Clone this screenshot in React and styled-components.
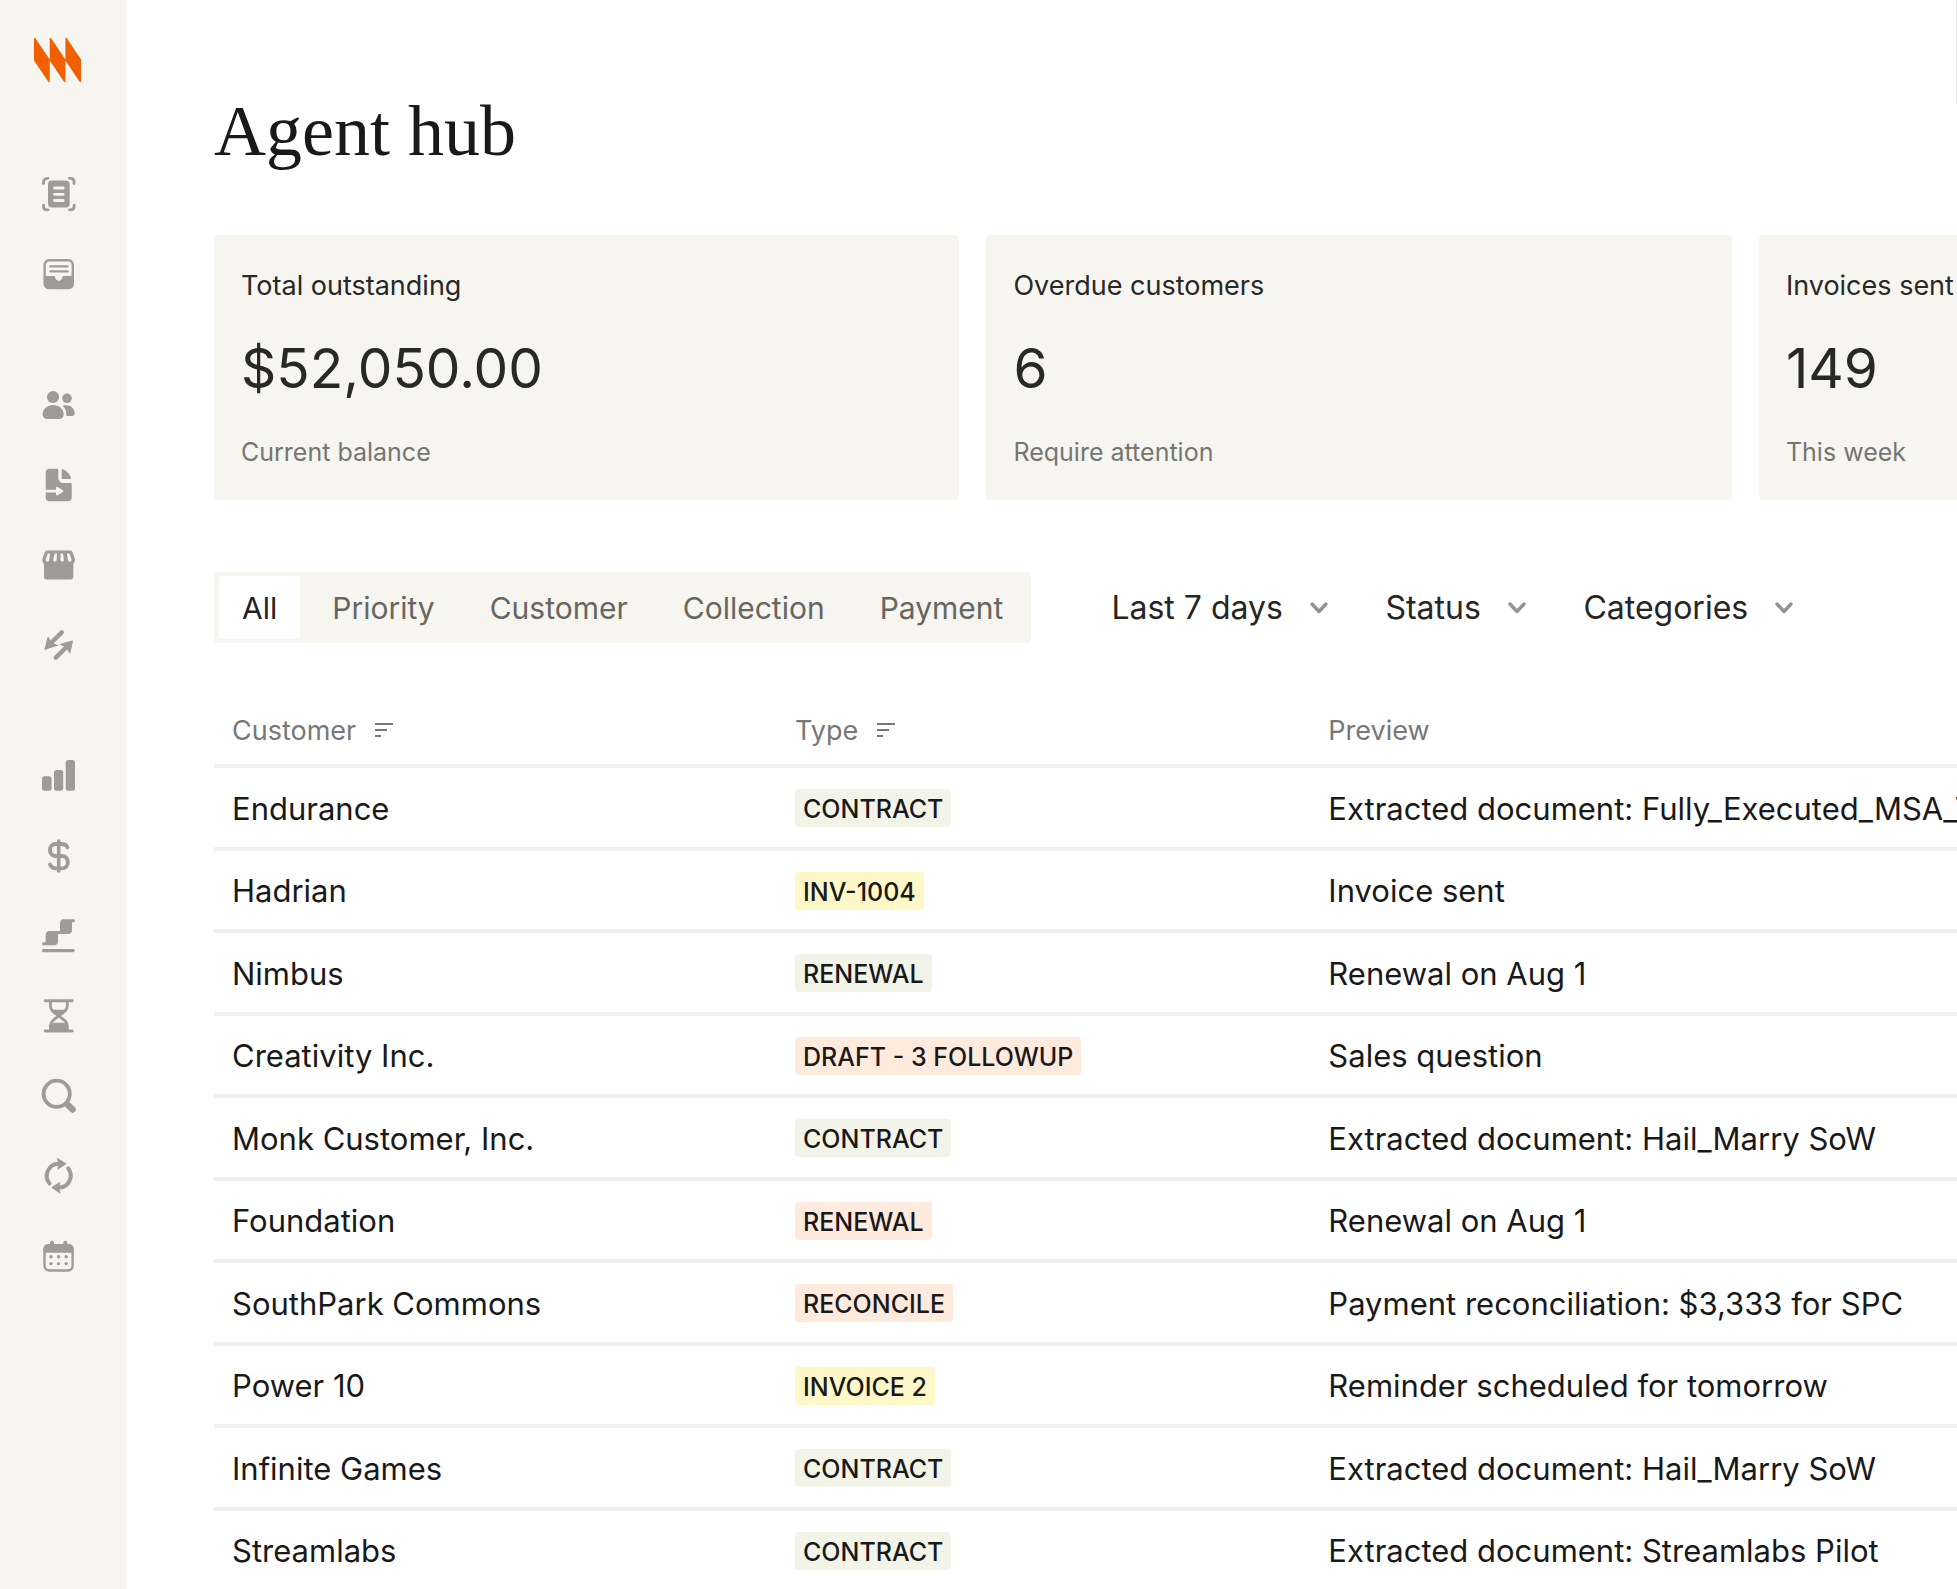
import React, { useState } from 'react'
import styled, { createGlobalStyle } from 'styled-components'

const GlobalStyle = createGlobalStyle`
  * {
    box-sizing: border-box;
  }
  body {
    margin: 0;
    background: #fff;
    color: #1a1a1a;
    font-family: 'Inter', sans-serif;
    overflow-x: hidden;
  }
  button,
  select {
    font: inherit;
    color: inherit;
    border: 0;
    margin: 0;
    background: none;
    cursor: pointer;
  }
`

const Shell = styled.div`
  display: grid;
  grid-template-columns: 126px minmax(0, 1fr);
  min-height: 100vh;
`

const Sidebar = styled.aside`
  background: #f6f5f0;
  padding: 38px 0 0 34px;
`

const Logo = styled.a`
  display: block;
  height: 44px;
  margin-bottom: 92px;
  svg {
    display: block;
    fill: #f06000;
  }
`

const NavGroup = styled.nav`
  display: flex;
  flex-direction: column;
  align-items: flex-start;
  gap: 40px;
  padding-left: 5px;
  margin-bottom: 91px;
`

const NavLink = styled.a`
  width: 40px;
  height: 40px;
  color: #9d9d95;
  svg {
    display: block;
    fill: none;
    stroke: none;
    stroke-linecap: round;
    stroke-linejoin: round;
  }
  .fill {
    fill: currentColor;
  }
  .line {
    stroke: currentColor;
  }
  .cut {
    fill: #f6f5f0;
  }
  .cut-line {
    stroke: #f6f5f0;
  }
`

const Main = styled.main`
  position: relative;
  padding: 83px 0 0 88px;
  overflow: hidden;
`

const EdgeLine = styled.div`
  position: absolute;
  top: 0;
  right: 0;
  width: 1px;
  height: 104px;
  background: #e6e6e6;
`

const Title = styled.h1`
  margin: 0 0 56px;
  font-family: 'Liberation Serif', serif;
  font-size: 72px;
  line-height: 96px;
  font-weight: 400;
  color: #19191a;
`

const Cards = styled.section`
  display: grid;
  grid-auto-flow: column;
  grid-auto-columns: 42.77%;
  gap: 27px;
`

const Card = styled.article`
  padding: 34px 27px 33px;
  background: #f6f5f0;
  border-radius: 4px;
  color: #282826;
  h2,
  p {
    margin: 0;
    font-weight: 400;
    white-space: nowrap;
  }
  h2 {
    font-size: 27px;
    line-height: 34px;
  }
  .value {
    margin: 31px 0 35px;
    font-size: 55px;
    line-height: 68px;
  }
  .note {
    font-size: 25px;
    line-height: 30px;
    color: #757572;
  }
`

const Toolbar = styled.div`
  display: flex;
  align-items: center;
  gap: 80px;
  margin-top: 72px;
`

const Tabs = styled.div`
  display: flex;
  gap: 9px;
  padding: 4px 5px;
  background: #f6f5f0;
  border-radius: 4px;
`

const Tab = styled.button`
  height: 63px;
  padding: 0 23px;
  border-radius: 4px;
  font-size: 30px;
  white-space: nowrap;
  background: ${({ $active }) => ($active ? '#fff' : 'transparent')};
  color: ${({ $active }) => ($active ? '#1f1f1e' : '#666662')};
`

const Filters = styled.div`
  display: flex;
  gap: 56px;
`

// the chevron shares the grid cell with the select it belongs to
const Filter = styled.label`
  display: grid;
  align-items: center;
  font-size: 32px;
  color: #262625;
  select,
  svg {
    grid-area: 1 / 1;
  }
  select {
    appearance: none;
    padding: 0 46px 0 0;
    height: 48px;
  }
  svg {
    justify-self: end;
    pointer-events: none;
  }
`

const Table = styled.table`
  width: 100%;
  margin-top: 53px;
  table-layout: fixed;
  border-collapse: separate;
  border-spacing: 0;
  th,
  td {
    padding: 0 0 0 18px;
    border-bottom: 4px solid #f0f0f0;
    text-align: left;
    vertical-align: middle;
    white-space: nowrap;
    overflow: hidden;
  }
  th {
    height: 72px;
    font-size: 27px;
    font-weight: 400;
    color: #777;
  }
  td {
    height: 83px;
    padding-top: 1px;
    font-size: 31px;
    color: #19191a;
  }
  tr:nth-child(even) td {
    height: 82px;
  }
  tbody tr:last-child td {
    height: 78px;
    border-bottom: 0;
  }
  .customer {
    width: 32.3%;
  }
  .type {
    width: 30.6%;
  }
`

const SortButton = styled.button`
  display: inline-flex;
  align-items: center;
  gap: 18px;
  padding: 0;
`

const badgeColors = {
  green: '#f3f4e8',
  yellow: '#fef7c8',
  orange: '#ffeade'
}

const Badge = styled.span`
  display: block;
  width: max-content;
  padding: 2px 8px 0;
  border-radius: 4px;
  font-size: 25px;
  line-height: 36px;
  font-weight: 500;
  background: ${({ $color }) => badgeColors[$color]};
`

const icons = {
  Documents: (
    <>
      <rect className="fill" x="9" y="6.6" width="21.7" height="27" rx="3.8" />
      <path className="cut-line" strokeWidth="2.8" d="M15.5 14h8.7M15.5 20.3h8.7M15.5 26.5h8.7" />
      <path
        className="line"
        strokeWidth="2.8"
        d="M4.5 9.6V8.2C4.5 6 6 4.3 8 4.3h1M30.5 4.3h1.2c2 0 3.4 1.6 3.4 3.9v1.4M4.5 31.2v1.2c0 2 1.5 3.4 3.5 3.4h1M30.5 35.8h1.2c2 0 3.4-1.4 3.4-3.4v-1.2"
      />
    </>
  ),
  Inbox: (
    <>
      <rect className="line" strokeWidth="2.4" x="5.6" y="6.2" width="28.2" height="27.8" rx="4.6" />
      <path className="line" strokeWidth="2.3" d="M11.4 12.4h17.2M11.4 17.4h17.2" />
      <path
        className="fill"
        d="M5 22h10c.8 0 1 .5 1.2 1.3.4 2 1.8 3.6 3.6 3.6s3.2-1.6 3.6-3.6c.2-.8.4-1.3 1.2-1.3h10v8.5a4.5 4.5 0 0 1-4.5 4.5h-20.500a4.500 4.500 0 0 1-4.500-4.500z"
      />
    </>
  ),
  Customers: (
    <>
      <circle className="fill" cx="14" cy="12" r="6.1" />
      <path className="fill" d="M3.7 29c0-5 4.500-9 10.500-9s10.500 4 10.500 9c0 3.400-1.700 5-5 5H8.700c-3.300 0-5-1.600-5-5z" />
      <circle className="fill" cx="28" cy="13.3" r="4.8" />
      <path className="fill" d="M24.200 20.600c6-1.800 11.500 2 11.500 7.400 0 2-1 3-3 3h-4.500c-.8 0-1-.5-1-1.400.1-4-1-6.500-3-8.200-.3-.3-.3-.6 0-.8z" />
    </>
  ),
  Files: (
    <>
      <path
        className="fill"
        d="M10.700 3.700h7.100c1 0 1.500.5 1.500 1.500v7c0 3.800 2 5.800 5.800 5.800h6.100c1 0 1.500.5 1.500 1.500v12.800a4 4 0 0 1-4 4h-18a4 4 0 0 1-4-4V7.700a4 4 0 0 1 4-4z"
      />
      <path className="fill" d="M22.700 5c0-.9.600-1.200 1.400-.8 3.700 1.600 6.500 4.700 7.900 8.400.3.900 0 1.500-.9 1.500h-6.900c-1 0-1.500-.5-1.500-1.500z" />
      <path className="cut" d="M6 24.700h11v-2c0-1 .7-1.300 1.500-.8l5.400 3.300c.7.500.7 1.200 0 1.700l-5.400 3.300c-.8.500-1.500.2-1.500-.8v-1.900H6z" />
    </>
  ),
  Store: (
    <>
      <path
        className="fill"
        d="M8.600 5.500h22.600c1.200 0 2 .6 2.400 1.700l2.200 6.300c.6 2-.2 4.300-1.500 5.500v12.700c0 1.800-1 2.800-2.800 2.800H7.800c-1.800 0-2.800-1-2.800-2.800V19c-1.300-1.200-2.100-3.500-1.500-5.500l2.200-6.300c.5-1.100 1.500-1.700 2.900-1.700z"
      />
      <path
        className="cut"
        d="M8.800 8.500H11L10.300 14.700c-.3 2.700-3.900 2.500-3.500-.2zM15.700 8.500H18l-.3 6.200c-.2 2.700-3.700 2.500-3.500-.2zM21.500 8.500h2.400l1 6c.2 2.700-3.300 2.900-3.400.2zM28 8.500h2.500l2 6c.4 2.700-3.200 2.900-3.600.2z"
      />
    </>
  ),
  Transfers: (
    <>
      <path className="line" strokeWidth="4.4" d="M22.800 7.400 11.500 18.500M16.800 32.600 28 21.500" />
      <path className="fill line" strokeWidth="1.2" d="M6 24.300 9 12.600l2.700 4.200 2.300 2 4.200 1.400zM33.400 16 21.800 19.400l4.200 1.800 2 2 2.800 4.600z" />
    </>
  ),
  Reports: (
    <>
      <rect className="fill" x="3" y="20.2" width="9.6" height="14.5" rx="2.5" />
      <rect className="fill" x="15" y="14" width="9.2" height="20.7" rx="2.5" />
      <rect className="fill" x="26.7" y="4" width="9.3" height="30.7" rx="2.5" />
    </>
  ),
  Payments: (
    <>
      <path className="line" strokeWidth="3.6" d="M19.700 5v30" />
      <path
        className="line"
        strokeWidth="3.8"
        d="M28.500 11.200C27.500 9 25 8 22.500 8H17c-3.800 0-6 2.500-6 6s2.200 6 6 6h5.800c3.800 0 6 2.600 6 6.200s-2.200 6.100-6 6.100H17c-3 0-5-1.300-6-3.800"
      />
    </>
  ),
  Milestones: (
    <>
      <path
        className="fill"
        d="M4.500 26.300h1.200c.7 0 1-.4 1-1V19a4 4 0 0 1 4-4h9.300c.7 0 1-.4 1-1V7.300a4 4 0 0 1 4-4h9.500a1.500 1.500 0 0 1 0 3h-.5c-.7 0-1 .4-1 1V14a4 4 0 0 1-4 4h-9c-.7 0-1 .4-1 1v6.300a4 4 0 0 1-4 4H4.500a1.500 1.500 0 0 1 0-3z"
      />
      <path className="line" strokeWidth="3.2" d="M4.600 34.600h29.600" />
    </>
  ),
  Pending: (
    <>
      <path className="line" strokeWidth="2.9" d="M6.200 4.700h27M6.200 35h27" />
      <path
        className="line"
        strokeWidth="2.8"
        d="M11.400 5v4.500c0 4.500 3 6.500 8.300 10.400 5.300-3.900 8.600-5.900 8.600-10.400V5M11.400 34.500v-4.200c0-4.500 3-6.500 8.300-10.400 5.300 3.900 8.600 5.900 8.600 10.400v4.200"
      />
      <path className="fill" d="M13 13.700h13.600c-1.400 2.600-4 4.200-6.900 6.500-2.900-2.300-5.300-3.900-6.700-6.500zM14.500 26.800h10.700c2 1.500 3 3 3 5V35H11.400v-3.200c0-2 1.100-3.500 3.100-5z" />
    </>
  ),
  Search: (
    <>
      <circle className="line" strokeWidth="3.8" cx="17.7" cy="17.8" r="13.1" />
      <path className="line" strokeWidth="5" d="M27.500 27.200 30 29.800" />
      <path className="line" strokeWidth="6.4" d="M29.800 29.700 33.600 33.500" />
    </>
  ),
  Sync: (
    <>
      <path className="line" strokeWidth="4" d="M10.500 27.400A12 12 0 0 1 19.500 7.800M29.200 12.300A12 12 0 0 1 20.500 31.600" />
      <path className="fill line" strokeWidth="1" d="M18.600 2.600 27 7.800 18.800 13.200 20 7.800zM21 37 12.800 31.500 20.800 26.500 19.600 31.600z" />
    </>
  ),
  Calendar: (
    <>
      <rect className="line" strokeWidth="2.4" x="5.5" y="9.3" width="28.1" height="25.2" rx="4.8" />
      <path className="line" strokeWidth="4" d="M13 6.700V10M26.300 6.700V10" />
      <path className="fill" d="M9.300 8.100h20.500a5 5 0 0 1 5 5v3.600H4.300v-3.600a5 5 0 0 1 5-5z" />
      <g className="fill">
        {[20.7, 27.6].map(y => [12, 19.6, 27.2].map(x => <circle key={`${x}-${y}`} cx={x} cy={y} r="1.7" />))}
      </g>
    </>
  )
}

const navGroups = [
  ['Documents', 'Inbox'],
  ['Customers', 'Files', 'Store', 'Transfers'],
  ['Reports', 'Payments', 'Milestones', 'Pending', 'Search', 'Sync', 'Calendar']
]

const cards = [
  { label: 'Total outstanding', value: '$52,050.00', note: 'Current balance' },
  { label: 'Overdue customers', value: '6', note: 'Require attention' },
  { label: 'Invoices sent', value: '149', note: 'This week' }
]

const tabs = ['All', 'Priority', 'Customer', 'Collection', 'Payment']
const filters = ['Last 7 days', 'Status', 'Categories']

const rows = [
  ['Endurance', 'CONTRACT', 'green', 'Extracted document: Fully_Executed_MSA_V1'],
  ['Hadrian', 'INV-1004', 'yellow', 'Invoice sent'],
  ['Nimbus', 'RENEWAL', 'green', 'Renewal on Aug 1'],
  ['Creativity Inc.', 'DRAFT - 3 FOLLOWUP', 'orange', 'Sales question'],
  ['Monk Customer, Inc.', 'CONTRACT', 'green', 'Extracted document: Hail_Marry SoW'],
  ['Foundation', 'RENEWAL', 'orange', 'Renewal on Aug 1'],
  ['SouthPark Commons', 'RECONCILE', 'orange', 'Payment reconciliation: $3,333 for SPC'],
  ['Power 10', 'INVOICE 2', 'yellow', 'Reminder scheduled for tomorrow'],
  ['Infinite Games', 'CONTRACT', 'green', 'Extracted document: Hail_Marry SoW'],
  ['Streamlabs', 'CONTRACT', 'green', 'Extracted document: Streamlabs Pilot']
]

const SortIcon = () => (
  <svg width="20" height="16" viewBox="0 0 20 16" fill="none" stroke="currentColor" strokeWidth="2">
    <path d="M1 2h18M1 8h12M1 14h6" />
  </svg>
)

const Chevron = () => (
  <svg width="20" height="14" viewBox="0 0 20 14" fill="none" stroke="#929292" strokeWidth="3.4" strokeLinecap="round" strokeLinejoin="round">
    <path d="M3 3l7 7.5 7-7.5" />
  </svg>
)

const App = () => {
  const [active, setActive] = useState('All')

  return (
    <>
      <GlobalStyle />
      <Shell>
        <Sidebar>
          <Logo href="#" aria-label="Home">
            <svg width="47" height="44" viewBox="0 0 47 44">
              <path d="M0 0h1.200l14.500 21.600V0h1.200l14.500 21.600V0h1.200L47 21.600V44h-1.200L31.400 22.500V44h-1.200L15.700 22.500V44h-1.200L0 22.500z" />
            </svg>
          </Logo>
          {navGroups.map((group, index) => (
            <NavGroup key={index}>
              {group.map(name => (
                <NavLink key={name} href="#" aria-label={name}>
                  <svg width="40" height="40" viewBox="0 0 40 40">
                    {icons[name]}
                  </svg>
                </NavLink>
              ))}
            </NavGroup>
          ))}
        </Sidebar>
        <Main>
          <EdgeLine />
          <Title>Agent hub</Title>
          <Cards>
            {cards.map(({ label, value, note }) => (
              <Card key={label}>
                <h2>{label}</h2>
                <p className="value">{value}</p>
                <p className="note">{note}</p>
              </Card>
            ))}
          </Cards>
          <Toolbar>
            <Tabs>
              {tabs.map(tab => (
                <Tab key={tab} $active={tab === active} onClick={() => setActive(tab)}>
                  {tab}
                </Tab>
              ))}
            </Tabs>
            <Filters>
              {filters.map(name => (
                <Filter key={name}>
                  <select aria-label={name}>
                    <option>{name}</option>
                  </select>
                  <Chevron />
                </Filter>
              ))}
            </Filters>
          </Toolbar>
          <Table>
            <thead>
              <tr>
                <th className="customer">
                  <SortButton>
                    Customer <SortIcon />
                  </SortButton>
                </th>
                <th className="type">
                  <SortButton>
                    Type <SortIcon />
                  </SortButton>
                </th>
                <th>Preview</th>
              </tr>
            </thead>
            <tbody>
              {rows.map(([customer, type, color, preview]) => (
                <tr key={customer}>
                  <td>{customer}</td>
                  <td>
                    <Badge $color={color}>{type}</Badge>
                  </td>
                  <td>{preview}</td>
                </tr>
              ))}
            </tbody>
          </Table>
        </Main>
      </Shell>
    </>
  )
}

export default App
